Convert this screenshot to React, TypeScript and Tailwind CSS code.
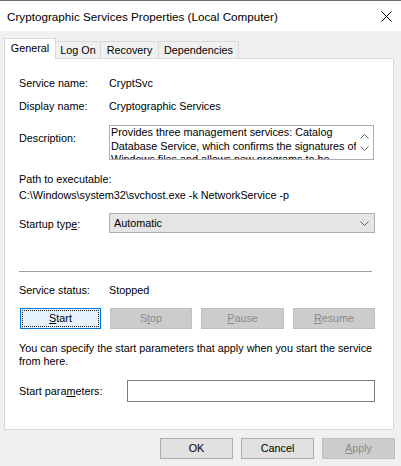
import React from "react";

const U = ({ children }: { children: React.ReactNode }) => (
  <span className="underline underline-offset-[1px] decoration-[1px]">{children}</span>
);

const Chevron = ({ up = false }: { up?: boolean }) => (
  <svg width="9" height="5" viewBox="0 0 9 5">
    <polyline
      points={up ? "0.5,4.5 4.5,0.5 8.5,4.5" : "0.5,0.5 4.5,4.5 8.5,0.5"}
      fill="none"
      stroke="#606060"
      strokeWidth="1"
    />
  </svg>
);

export default function App() {
  return (
    <div className="w-[401px] h-[466px] bg-[#f0f0f0] border-t border-[#6a6a6a] flex flex-col font-['Liberation_Sans',Arial,sans-serif] text-black text-[10.8px] leading-[15px]">
      {/* Title bar */}
      <div className="h-[30px] bg-white flex items-center justify-between pl-[7px] pr-[9px]">
        <span className="text-[11.7px] text-black">Cryptographic Services Properties (Local Computer)</span>
        <svg width="11" height="11" viewBox="0 0 11 11">
          <line x1="0.5" y1="0.5" x2="10.5" y2="10.5" stroke="#000" strokeWidth="1" />
          <line x1="10.5" y1="0.5" x2="0.5" y2="10.5" stroke="#000" strokeWidth="1" />
        </svg>
      </div>

      {/* Tabs */}
      <div className="pl-[4px] pt-[7px] flex items-end h-[27px]">
        <div className="relative z-10 -mb-px h-[21px] w-[52px] bg-white border border-b-0 border-[#d9d9d9] flex items-start justify-center pt-[2px] leading-[15px]">
          General
        </div>
        <div className="h-[17px] w-[45px] border-t border-r border-[#d9d9d9] flex items-center justify-center pt-[1px]">
          Log On
        </div>
        <div className="h-[17px] w-[58px] border-t border-r border-[#d9d9d9] flex items-center justify-center pt-[1px]">
          Recovery
        </div>
        <div className="h-[17px] w-[80px] border-t border-r border-[#d9d9d9] flex items-center justify-center pt-[1px]">
          Dependencies
        </div>
      </div>

      {/* Panel */}
      <div className="ml-[4px] w-[390px] h-[372px] bg-white border border-[#d9d9d9] pl-[14px] flex flex-col">
        <div className="mt-[17px] flex">
          <div className="w-[90px]">Service name:</div>
          <div>CryptSvc</div>
        </div>
        <div className="mt-[8px] flex">
          <div className="w-[90px]">Display name:</div>
          <div>Cryptographic Services</div>
        </div>
        <div className="mt-[11px] flex">
          <div className="w-[90px] pt-[6px]">Description:</div>
          <div className="w-[265px] h-[35px] border border-[#abadb3] flex overflow-hidden">
            <div className="flex-1 pl-[1px] leading-[13.7px] overflow-hidden whitespace-nowrap">
              <div>Provides three management services: Catalog</div>
              <div>Database Service, which confirms the signatures of</div>
              <div>Windows files and allows new programs to be</div>
            </div>
            <div className="w-[17px] flex flex-col items-center justify-between pt-[8px] pb-[8px]">
              <Chevron up />
              <Chevron />
            </div>
          </div>
        </div>
        <div className="mt-[12px]">Path to executable:</div>
        <div className="pt-[1px]">C:\Windows\system32\svchost.exe -k NetworkService -p</div>
        <div className="mt-[10px] flex items-start">
          <div className="w-[90px] pt-[4px]">
            Startup typ<U>e</U>:
          </div>
          <div className="w-[266px] h-[20px] bg-[#e5e5e5] border border-[#adadad] flex items-center justify-between pl-[4px] pr-[5px]">
            <span>Automatic</span>
            <Chevron />
          </div>
        </div>
        <div className="mt-[38px] w-[353px] h-px bg-[#a0a0a0]" />
        <div className="mt-[11px] flex">
          <div className="w-[90px]">Service status:</div>
          <div>Stopped</div>
        </div>
        <div className="mt-[10px] flex gap-[9px] pl-[1px]">
          <div className="w-[81px] h-[21px] bg-[#e5f1fb] border border-[#0078d7] p-[1px]">
            <div className="w-full h-full border border-dotted border-[#1a1a1a] flex items-center justify-center">
              <span>
                <U>S</U>tart
              </span>
            </div>
          </div>
          <div className="w-[82px] h-[21px] bg-[#cccccc] border border-[#bfbfbf] flex items-center justify-center text-[#8a8a8a]">
            <span>
              S<U>t</U>op
            </span>
          </div>
          <div className="w-[83px] h-[21px] bg-[#cccccc] border border-[#bfbfbf] flex items-center justify-center text-[#8a8a8a]">
            <span>
              <U>P</U>ause
            </span>
          </div>
          <div className="w-[82px] h-[21px] bg-[#cccccc] border border-[#bfbfbf] flex items-center justify-center text-[#8a8a8a]">
            <span>
              <U>R</U>esume
            </span>
          </div>
        </div>
        <div className="mt-[13px] leading-[13px] w-[360px]">
          You can specify the start parameters that apply when you start the service
          <br />
          from here.
        </div>
        <div className="mt-[12px] flex items-center">
          <div className="w-[108px]">
            Start para<U>m</U>eters:
          </div>
          <div className="w-[248px] h-[22px] border border-[#7a7a7a] bg-white" />
        </div>
      </div>

      {/* Bottom buttons */}
      <div className="mt-[8px] flex justify-end gap-[8px] pr-[6px]">
        <div className="w-[73px] h-[21px] bg-[#e1e1e1] border border-[#adadad] flex items-center justify-center">
          OK
        </div>
        <div className="w-[73px] h-[21px] bg-[#e1e1e1] border border-[#adadad] flex items-center justify-center">
          Cancel
        </div>
        <div className="w-[73px] h-[21px] bg-[#cccccc] border border-[#bfbfbf] flex items-center justify-center text-[#8a8a8a]">
          <span>
            <U>A</U>pply
          </span>
        </div>
      </div>
    </div>
  );
}
